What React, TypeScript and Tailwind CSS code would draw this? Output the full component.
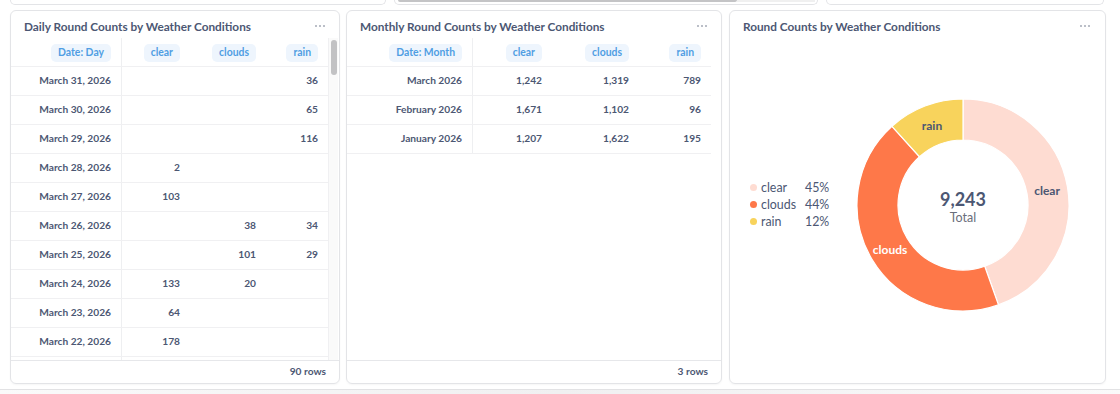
import React from "react";

const daily: string[][] = [
  ["March 31, 2026", "", "", "36"],
  ["March 30, 2026", "", "", "65"],
  ["March 29, 2026", "", "", "116"],
  ["March 28, 2026", "2", "", ""],
  ["March 27, 2026", "103", "", ""],
  ["March 26, 2026", "", "38", "34"],
  ["March 25, 2026", "", "101", "29"],
  ["March 24, 2026", "133", "20", ""],
  ["March 23, 2026", "64", "", ""],
  ["March 22, 2026", "178", "", ""],
  ["", "", "", ""],
];

const monthly: string[][] = [
  ["March 2026", "1,242", "1,319", "789"],
  ["February 2026", "1,671", "1,102", "96"],
  ["January 2026", "1,207", "1,622", "195"],
];

function Dots() {
  return (
    <div className="flex gap-[2px] items-center">
      <span className="w-[2px] h-[2px] rounded-full bg-[#a5aab6]" />
      <span className="w-[2px] h-[2px] rounded-full bg-[#a5aab6]" />
      <span className="w-[2px] h-[2px] rounded-full bg-[#a5aab6]" />
    </div>
  );
}

function Title({ text, dotsRight }: { text: string; dotsRight: string }) {
  return (
    <div className={"h-[27px] flex items-start pt-[8px] pl-[13px] " + dotsRight}>
      <div className="flex-1 text-[11.8px] leading-[15px] font-bold text-[#4c5773]">{text}</div>
      <div className="pt-[6px]">
        <Dots />
      </div>
    </div>
  );
}

function Pill({ text }: { text: string }) {
  return (
    <span className="inline-flex items-center h-[18px] px-[7px] rounded-[5px] bg-[#eef5fd] text-[#509ee3] text-[10.4px] font-bold">
      {text}
    </span>
  );
}

function Footer({ text }: { text: string }) {
  return (
    <div className="h-[23px] border-t border-[#e6e7ea] flex items-center justify-end pr-[13px] text-[10.2px] font-bold text-[#4c5773]">
      {text}
    </div>
  );
}

function TableRows({ rows, widths, header }: { rows: string[][]; widths: string[]; header: string[] }) {
  return (
    <div>
      <div className="flex h-[29px] border-b border-[#f0f0f2]">
        {header.map((h, i) => (
          <div key={i} className={widths[i] + " flex items-center justify-end pr-[10px] pt-[2px] " + (i === 0 ? "border-r border-[#eeeff1]" : "")}>
            <Pill text={h} />
          </div>
        ))}
      </div>
      {rows.map((r, ri) => (
        <div key={ri} className="flex h-[29px] border-b border-[#f0f0f2]">
          {r.map((c, i) => (
            <div
              key={i}
              className={widths[i] + " flex items-center justify-end pr-[10px] text-[10.2px] font-bold text-[#4c5773] " + (i === 0 ? "border-r border-[#eeeff1]" : "")}
            >
              {c}
            </div>
          ))}
        </div>
      ))}
    </div>
  );
}

function arcPath(a0: number, a1: number, R: number, r: number, cx: number, cy: number) {
  const p = (a: number, rad: number) => [cx + rad * Math.sin(a), cy - rad * Math.cos(a)];
  const large = a1 - a0 > Math.PI ? 1 : 0;
  const [x0, y0] = p(a0, R);
  const [x1, y1] = p(a1, R);
  const [x2, y2] = p(a1, r);
  const [x3, y3] = p(a0, r);
  return `M${x0} ${y0} A${R} ${R} 0 ${large} 1 ${x1} ${y1} L${x2} ${y2} A${r} ${r} 0 ${large} 0 ${x3} ${y3} Z`;
}

function Donut() {
  const total = 9243;
  const segs = [
    { v: 4120, c: "#fedcd2" },
    { v: 4043, c: "#fe7849" },
    { v: 1080, c: "#f8d35c" },
  ];
  let a = 0;
  const paths = segs.map((s, i) => {
    const a0 = a;
    const a1 = a + (s.v / total) * Math.PI * 2;
    a = a1;
    return <path key={i} d={arcPath(a0, a1, 106, 65, 106, 106)} fill={s.c} stroke="#ffffff" strokeWidth={1.2} />;
  });
  return (
    <svg width="212" height="212" viewBox="0 0 212 212">
      {paths}
      <text x="75" y="31" textAnchor="middle" fontFamily="Lato, sans-serif" fontSize="12" fontWeight="700" fill="#4c5773">rain</text>
      <text x="190" y="96" textAnchor="middle" fontFamily="Lato, sans-serif" fontSize="12" fontWeight="700" fill="#4c5773">clear</text>
      <text x="33" y="155" textAnchor="middle" fontFamily="Lato, sans-serif" fontSize="12" fontWeight="700" fill="#ffffff">clouds</text>
      <text x="106" y="107" textAnchor="middle" fontFamily="Lato, sans-serif" fontSize="18" fontWeight="700" fill="#4c5773">9,243</text>
      <text x="106" y="123" textAnchor="middle" fontFamily="Lato, sans-serif" fontSize="12.5" fontWeight="400" fill="#696e7b">Total</text>
    </svg>
  );
}

export default function App() {
  return (
    <div className="w-[1120px] h-[394px] bg-white overflow-hidden" style={{ fontFamily: "Lato, 'Open Sans', sans-serif" }}>
      {/* cropped cards above */}
      <div className="flex h-[5px] pl-[10px]">
        <div className="w-[376px] h-[5px] border-b border-x border-[#e3e4e7] rounded-b-[5px]" />
        <div className="ml-[8px] w-[424px] h-[5px] border-b border-x border-[#e3e4e7] rounded-b-[5px] flex pl-[3px]">
          <div className="w-[339px] h-[2px] bg-[#c4c4c6] rounded-b-[2px]" />
          <div className="w-[78px] h-[2px] bg-[#f0f0f0]" />
        </div>
        <div className="ml-[8px] w-[278px] h-[5px] border-b border-x border-[#e3e4e7] rounded-b-[5px]" />
      </div>

      <div className="flex mt-[5px] pl-[10px] h-[374px]">
        {/* Card 1 */}
        <div className="w-[330px] h-[374px] border border-[#e3e4e7] rounded-[6px] shadow-[0_1px_2px_rgba(0,0,0,0.04)] flex flex-col overflow-hidden">
          <Title text="Daily Round Counts by Weather Conditions" dotsRight="pr-[14px]" />
          <div className="h-[322px] flex overflow-hidden">
            <div className="w-[317px] overflow-hidden">
              <TableRows
                rows={daily}
                widths={["w-[111px]", "w-[68px]", "w-[76px]", "w-[62px]"]}
                header={["Date: Day", "clear", "clouds", "rain"]}
              />
            </div>
            <div className="w-[10px] h-full border-l border-[#f0f0f2] bg-[#fafafa] pt-[2px] pl-[2px]">
              <div className="w-[6px] h-[35px] rounded-full bg-[#c2c2c4]" />
            </div>
          </div>
          <Footer text="90 rows" />
        </div>

        {/* Card 2 */}
        <div className="ml-[6px] w-[376px] h-[374px] border border-[#e3e4e7] rounded-[6px] shadow-[0_1px_2px_rgba(0,0,0,0.04)] flex flex-col overflow-hidden">
          <Title text="Monthly Round Counts by Weather Conditions" dotsRight="pr-[14px]" />
          <div className="h-[322px] overflow-hidden">
            <div className="w-[364px]">
              <TableRows
                rows={monthly}
                widths={["w-[126px]", "w-[79px]", "w-[87px]", "w-[72px]"]}
                header={["Date: Month", "clear", "clouds", "rain"]}
              />
            </div>
          </div>
          <Footer text="3 rows" />
        </div>

        {/* Card 3 */}
        <div className="ml-[7px] w-[377px] h-[374px] border border-[#e3e4e7] rounded-[6px] shadow-[0_1px_2px_rgba(0,0,0,0.04)] flex flex-col overflow-hidden">
          <Title text="Round Counts by Weather Conditions" dotsRight="pr-[15px]" />
          <div className="flex-1 flex items-center pl-[20px] pb-[12px]">
            <div className="w-[87px] flex flex-col text-[12.4px] leading-[17px] text-[#4c5773]">
              {[
                ["clear", "45%", "bg-[#fedcd2]"],
                ["clouds", "44%", "bg-[#fe7849]"],
                ["rain", "12%", "bg-[#f8d35c]"],
              ].map(([n, p, c]) => (
                <div key={n} className="flex items-center">
                  <span className={"w-[7px] h-[7px] rounded-full " + c} />
                  <span className="ml-[4px] w-[44px]">{n}</span>
                  <span>{p}</span>
                </div>
              ))}
            </div>
            <div className="ml-[20px]">
              <Donut />
            </div>
          </div>
        </div>
      </div>

      <div className="mt-[5px] h-[5px] border-t border-[#e2e2e4] bg-gradient-to-r from-[#fafafa] via-[#f0f0f1] to-[#fafafa]" />
    </div>
  );
}
